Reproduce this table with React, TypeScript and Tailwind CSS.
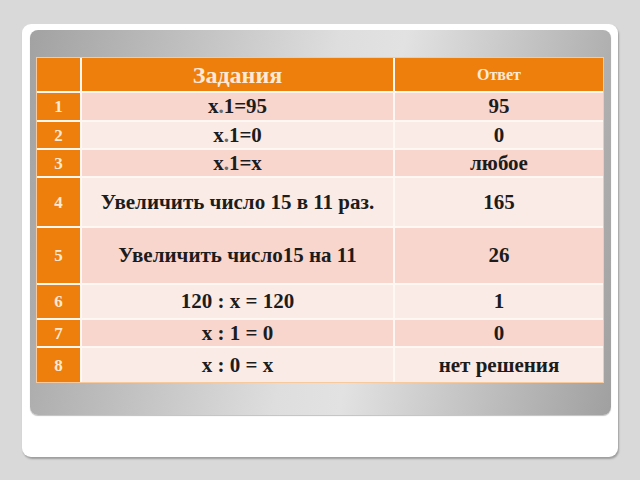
import React from "react";

type Row = { n: string; task: string; ans: string; shade: "a" | "b" };

const rows: Row[] = [
  { n: "1", task: "x.1=95", ans: "95", shade: "a" },
  { n: "2", task: "x.1=0", ans: "0", shade: "b" },
  { n: "3", task: "x.1=x", ans: "любое", shade: "a" },
  { n: "4", task: "Увеличить число 15 в 11 раз.", ans: "165", shade: "b" },
  { n: "5", task: "Увеличить число15 на 11", ans: "26", shade: "a" },
  { n: "6", task: "120 : x = 120", ans: "1", shade: "b" },
  { n: "7", task: "x : 1 = 0", ans: "0", shade: "a" },
  { n: "8", task: "x : 0 = x", ans: "нет решения", shade: "b" },
];

function Task({ text }: { text: string }) {
  if (text.startsWith("x.1")) {
    return (
      <span>
        x<span className="text-[#6b6b6b]">.</span>
        {text.slice(2)}
      </span>
    );
  }
  return <span>{text}</span>;
}

export default function App() {
  return (
    <div className="w-[640px] h-[480px] bg-[#d9d9d9] pt-[24px] pl-[22px] font-['Liberation_Serif',serif] font-bold">
      <div className="w-[596px] h-[433px] bg-white rounded-[9px] shadow-[1px_2px_2px_rgba(0,0,0,0.28)] pt-[6px] pl-[8px]">
        <div className="w-[581px] h-[385px] rounded-[8px] bg-[linear-gradient(100deg,#a2a2a2_0%,#bdbdbd_22%,#dedede_48%,#e2e2e2_58%,#bcbcbc_82%,#a0a0a0_100%)] shadow-[0_1px_1px_rgba(0,0,0,0.25)] pt-[28px] pl-[7px]">
          <div className="w-[566px] grid grid-cols-[43px_311px_208px] grid-rows-[33px_27px_26px_26px_48px_55px_33px_26px_34px] gap-[2px] bg-[#fff7f2] outline outline-1 outline-[#f7c99c]">
            <div className="bg-[#ef7f0d]" />
            <div className="bg-[#ef7f0d] flex items-center justify-center text-[24px] leading-none text-[#fdead6]">
              Задания
            </div>
            <div className="bg-[#ef7f0d] flex items-center justify-center text-[16px] leading-none text-[#fdead6]">
              Ответ
            </div>
            {rows.map((r) => {
              const bg = r.shade === "a" ? "bg-[#f9d6cd]" : "bg-[#fbebe6]";
              return (
                <React.Fragment key={r.n}>
                  <div className="bg-[#ef7f0d] flex items-center justify-center text-[17px] leading-none text-[#fdead6]">
                    {r.n}
                  </div>
                  <div className={`${bg} flex items-center justify-center text-[21px] leading-none text-[#1c1c1c]`}>
                    <Task text={r.task} />
                  </div>
                  <div className={`${bg} flex items-center justify-center text-[21px] leading-none text-[#1c1c1c]`}>
                    {r.ans}
                  </div>
                </React.Fragment>
              );
            })}
          </div>
        </div>
      </div>
    </div>
  );
}
